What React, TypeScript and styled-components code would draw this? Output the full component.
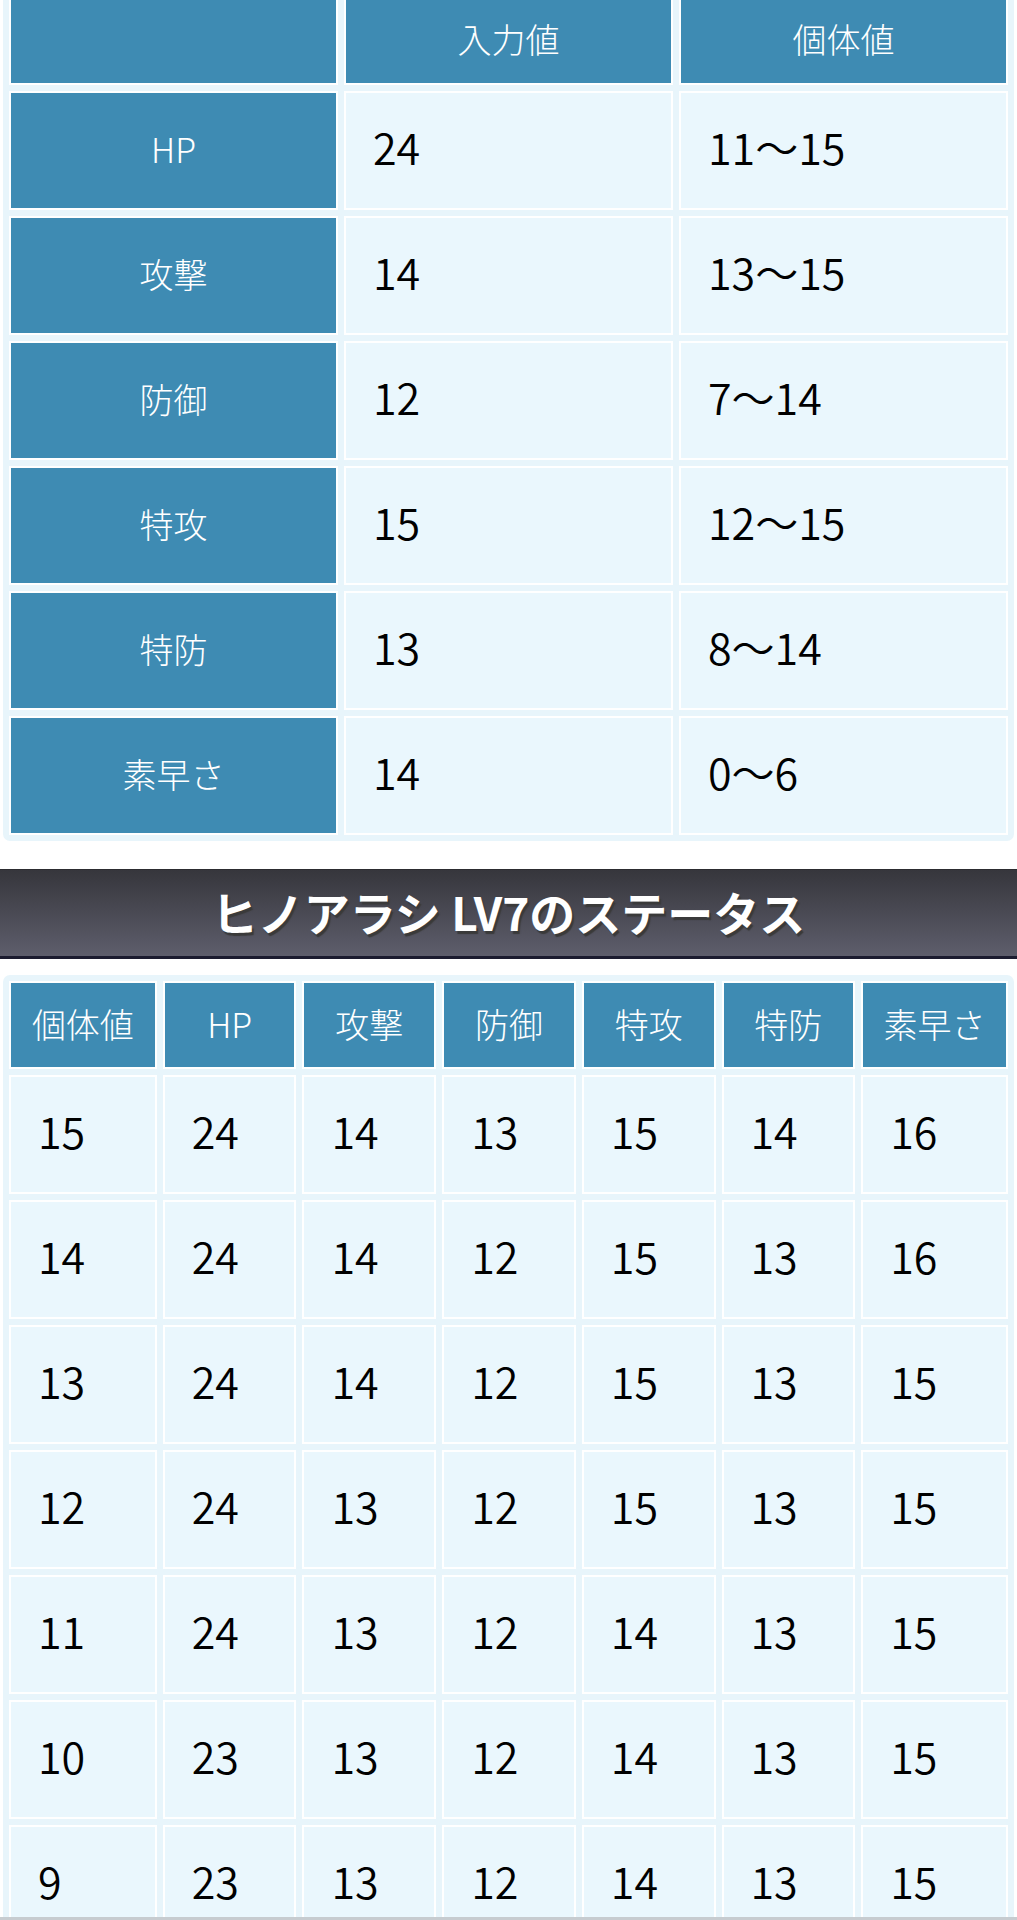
import { createGlobalStyle } from "styled-components";
import styled from "styled-components";

const GlobalStyle = createGlobalStyle`
  html, body {
    margin: 0;
    padding: 0;
    background: #ffffff;
  }
  body {
    font-family: "Noto Sans CJK JP", "Noto Sans", sans-serif;
    overflow: hidden;
  }
`;

const Page = styled.div`
  width: 1017px;
  display: flex;
  flex-direction: column;
`;

const TableWrap = styled.div<{ $top: number }>`
  padding: 0 3px;
  margin-top: ${(p) => p.$top}px;
`;

const Table = styled.table`
  width: 100%;
  border-collapse: separate;
  border-spacing: 6px;
  background: #e8f5fb;
  border-radius: 7px;
  table-layout: fixed;
`;

const HeadCell = styled.th<{ $h?: number }>`
  box-sizing: border-box;
  height: ${(p) => p.$h ?? 88}px;
  border: 2px solid #ffffff;
  background: #3e8bb3;
  color: #ffffff;
  font-weight: 300;
  font-size: 34px;
  text-align: center;
  vertical-align: middle;
  padding: 0 0 4px;
  white-space: nowrap;
`;

const DataCell = styled.td`
  box-sizing: border-box;
  height: 119px;
  border: 2px solid #ffffff;
  background: #eaf7fd;
  color: #000000;
  font-size: 43px;
  font-weight: 350;
  text-align: left;
  vertical-align: middle;
  padding: 0 0 10px 27px;
  white-space: nowrap;
`;

const Banner = styled.div`
  margin-top: 28px;
  height: 86px;
  display: flex;
  align-items: center;
  justify-content: center;
  background: linear-gradient(#36363c, #5e5e6c);
  border-top: 1px solid #2c2c30;
  border-bottom: 3px solid #1c1c30;
`;

const BannerTitle = styled.h2`
  margin: 0 0 4px;
  color: #ffffff;
  font-size: 46px;
  font-weight: 700;
  text-shadow: 2px 3px 1px #3a3a3a;
`;

const BottomEdge = styled.div`
  position: fixed;
  left: 0;
  right: 0;
  bottom: 0;
  height: 3px;
  background: #c7ccd0;
`;

const inputRows = [
  { label: "HP", input: "24", iv: "11〜15" },
  { label: "攻撃", input: "14", iv: "13〜15" },
  { label: "防御", input: "12", iv: "7〜14" },
  { label: "特攻", input: "15", iv: "12〜15" },
  { label: "特防", input: "13", iv: "8〜14" },
  { label: "素早さ", input: "14", iv: "0〜6" },
];

const statHeads = ["個体値", "HP", "攻撃", "防御", "特攻", "特防", "素早さ"];
const statWidths = [147, 133, 133, 133, 133, 133, 146];

const statRows = [
  ["15", "24", "14", "13", "15", "14", "16"],
  ["14", "24", "14", "12", "15", "13", "16"],
  ["13", "24", "14", "12", "15", "13", "15"],
  ["12", "24", "13", "12", "15", "13", "15"],
  ["11", "24", "13", "12", "14", "13", "15"],
  ["10", "23", "13", "12", "14", "13", "15"],
  ["9", "23", "13", "12", "14", "13", "15"],
];

export default function App() {
  return (
    <>
      <GlobalStyle />
      <Page>
        <TableWrap $top={-11}>
          <Table>
            <thead>
              <tr>
                <HeadCell $h={90} />
                <HeadCell $h={90}>入力値</HeadCell>
                <HeadCell $h={90}>個体値</HeadCell>
              </tr>
            </thead>
            <tbody>
              {inputRows.map((r) => (
                <tr key={r.label}>
                  <HeadCell>{r.label}</HeadCell>
                  <DataCell>{r.input}</DataCell>
                  <DataCell>{r.iv}</DataCell>
                </tr>
              ))}
            </tbody>
          </Table>
        </TableWrap>

        <Banner>
          <BannerTitle>ヒノアラシ LV7のステータス</BannerTitle>
        </Banner>

        <TableWrap $top={16}>
          <Table>
            <colgroup>
              {statWidths.map((w, i) => (
                <col key={i} style={{ width: w }} />
              ))}
            </colgroup>
            <thead>
              <tr>
                {statHeads.map((h) => (
                  <HeadCell key={h}>{h}</HeadCell>
                ))}
              </tr>
            </thead>
            <tbody>
              {statRows.map((row, i) => (
                <tr key={i}>
                  {row.map((v, j) => (
                    <DataCell key={j}>{v}</DataCell>
                  ))}
                </tr>
              ))}
            </tbody>
          </Table>
        </TableWrap>
      </Page>
      <BottomEdge />
    </>
  );
}
